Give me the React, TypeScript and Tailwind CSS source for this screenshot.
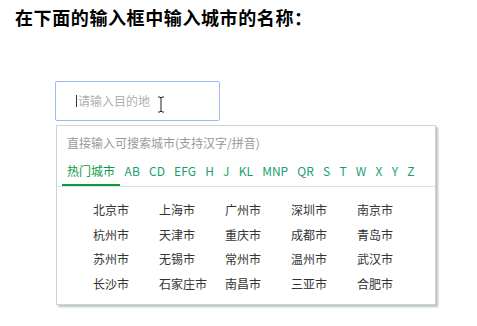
import React from "react";

const tabs = ["热门城市", "AB", "CD", "EFG", "H", "J", "KL", "MNP", "QR", "S", "T", "W", "X", "Y", "Z"];

const cities = [
  "北京市", "上海市", "广州市", "深圳市", "南京市",
  "杭州市", "天津市", "重庆市", "成都市", "青岛市",
  "苏州市", "无锡市", "常州市", "温州市", "武汉市",
  "长沙市", "石家庄市", "南昌市", "三亚市", "合肥市",
];

const App: React.FC = () => {
  return (
    <div className="w-[477px] h-[326px] bg-white pl-[15px] pt-[5px] font-['Noto_Sans_CJK_SC',sans-serif]">
      <h1 className="text-[18px] leading-[24px] font-bold tracking-[0.6px] text-black">
        在下面的输入框中输入城市的名称：
      </h1>

      <div className="ml-[40px] mt-[52px]">
        {/* input box */}
        <div className="relative w-[165px] h-[40px] border border-[#9db9f2] rounded-[2px] flex items-center pl-[20px]">
          <span className="w-px h-[12px] bg-[#333] mr-[1px]" />
          <span className="text-[12px] text-[#b0b0b0]">请输入目的地</span>
          <svg
            className="absolute left-[101px] top-[14px]"
            width="8"
            height="17"
            viewBox="0 0 8 17"
          >
            <path d="M1 1h2l1 1 1-1h2M4 2v13M1 16h2l1-1 1 1h2" stroke="#222" strokeWidth="1" fill="none" />
          </svg>
        </div>

        {/* dropdown */}
        <div className="mt-[4px] ml-[1px] w-[380px] h-[180px] border border-[#cfd4d2] bg-white shadow-[2px_2px_2px_#b7c3bf]">
          <div className="pl-[10px] pt-[9px] text-[12px] leading-[16px] text-[#999]">
            直接输入可搜索城市(支持汉字/拼音)
          </div>
          <div className="flex px-[5px] mt-[11px] border-b border-[#dde0df]">
            {tabs.map((t, i) => (
              <div
                key={t}
                className={
                  i === 0
                    ? "shrink-0 whitespace-nowrap px-[5px] h-[24px] text-[12px] leading-[18px] text-[#0b9a3f] border-b-2 border-[#0b9a3f]"
                    : "shrink-0 whitespace-nowrap px-[4.6px] h-[24px] text-[12px] leading-[18px] text-[#169f6c]"
                }
              >
                {t}
              </div>
            ))}
          </div>
          <div className="grid grid-cols-[66px_66px_66px_66px_66px] pl-[36px] pt-[11px]">
            {cities.map((c) => (
              <div key={c} className="h-[24.7px] text-[12px] leading-[24px] text-[#333]">
                {c}
              </div>
            ))}
          </div>
        </div>
      </div>
    </div>
  );
};

export default App;
